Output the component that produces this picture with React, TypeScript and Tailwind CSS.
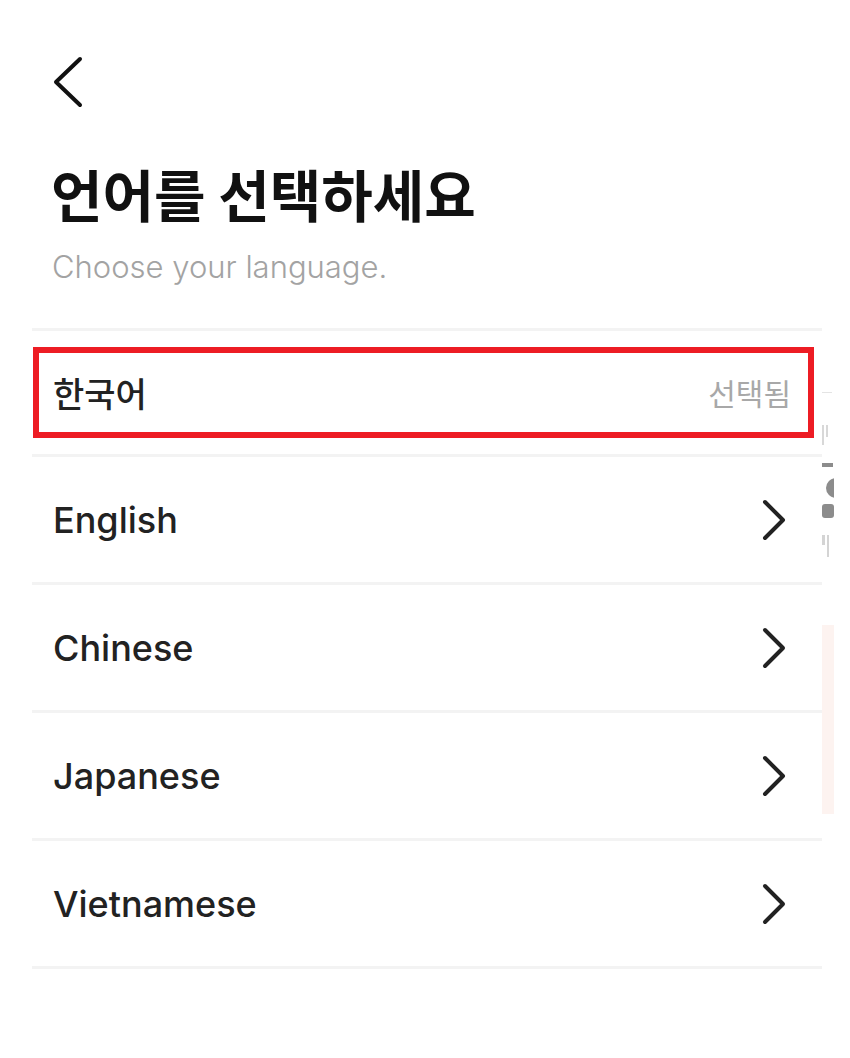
import React from "react";

const languages = ["English", "Chinese", "Japanese", "Vietnamese"];

function BackIcon() {
  return (
    <svg width="32" height="52" viewBox="0 0 32 52" fill="none">
      <polyline points="28,3 4,26 28,49" stroke="#111" strokeWidth="4" strokeLinecap="round" strokeLinejoin="round" />
    </svg>
  );
}

function ChevronRight() {
  return (
    <svg width="26" height="42" viewBox="0 0 26 42" fill="none">
      <polyline points="4,3 22,21 4,39" stroke="#222" strokeWidth="4" strokeLinecap="round" strokeLinejoin="round" />
    </svg>
  );
}

// clipped bits of the neighbouring screen along the right edge
function EdgeStrip() {
  return (
    <div className="w-[12px] shrink-0 flex flex-col">
      <div className="h-[392px]" />
      <div className="h-[1px] w-[10px] bg-[#e4e4e4]" />
      <div className="h-[32px]" />
      <div className="h-[20px] w-[8px] flex gap-[2px]">
        <div className="w-[2px] h-full bg-[#d8d8d8]" />
        <div className="w-[2px] h-[12px] bg-[#d8d8d8]" />
      </div>
      <div className="h-[18px]" />
      <div className="h-[4px] w-[11px] bg-[#8c8c8c]" />
      <svg width="12" height="48" viewBox="0 0 12 48" className="mt-[6px]">
        <circle cx="14" cy="15" r="10" fill="#8c8c8c" />
        <rect x="0" y="31" width="12" height="14" rx="3" fill="#8c8c8c" />
      </svg>
      <div className="h-[14px]" />
      <div className="h-[22px] w-[9px] flex gap-[2px]">
        <div className="w-[3px] h-[10px] bg-[#d4d4d4]" />
        <div className="w-[2px] h-full bg-[#d4d4d4]" />
      </div>
      <div className="h-[68px]" />
      <div className="h-[189px] w-[12px] bg-[#fdf3f0]" />
    </div>
  );
}

export default function App() {
  return (
    <div className="w-[850px] h-[1058px] bg-white overflow-hidden flex" style={{ fontFamily: "Inter, 'Noto Sans CJK KR', sans-serif" }}>
      <div className="w-[32px] shrink-0" />
      <div className="w-[790px] shrink-0 flex flex-col">
        {/* Header */}
        <div className="h-[328px] flex flex-col">
          <div className="pt-[56px] pl-[20px]">
            <BackIcon />
          </div>
          <h1
            className="mt-[52px] pl-[19px] text-[56px] font-bold leading-[66px] text-[#111]"
            style={{ fontFamily: "'Noto Sans CJK KR', sans-serif" }}
          >
            언어를 선택하세요
          </h1>
          <p className="mt-[22px] pl-[20px] text-[31px] font-light leading-[38px] text-[#a3a3a3]">
            Choose your language.
          </p>
        </div>

        {/* Selected language */}
        <div className="h-[129px] border-t-[3px] border-b-[3px] border-[#f3f3f3] flex items-center">
          <div className="w-[781px] h-[91px] ml-[1px] border-[6px] border-[#ed1c24] flex items-center justify-between pl-[14px] pr-[17px]" style={{ fontFamily: "'Noto Sans CJK KR', sans-serif" }}>
            <span className="text-[34px] font-medium text-[#222]">한국어</span>
            <span className="text-[30px] text-[#a8a8a8]">선택됨</span>
          </div>
        </div>

        {/* Other languages */}
        {languages.map((lang) => (
          <div key={lang} className="h-[128px] border-b-[3px] border-[#f3f3f3] flex items-center justify-between pl-[21px] pr-[35px]">
            <span className="text-[36px] font-medium text-[#222]">{lang}</span>
            <ChevronRight />
          </div>
        ))}
      </div>
      <EdgeStrip />
    </div>
  );
}
